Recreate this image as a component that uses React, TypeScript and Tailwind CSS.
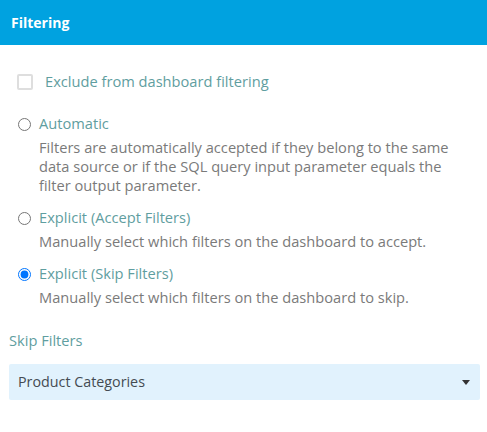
import { useState } from "react";

const options = [
  {
    id: "automatic",
    label: "Automatic",
    description:
      "Filters are automatically accepted if they belong to the same data source or if the SQL query input parameter equals the filter output parameter.",
  },
  {
    id: "accept",
    label: "Explicit (Accept Filters)",
    description: "Manually select which filters on the dashboard to accept.",
  },
  {
    id: "skip",
    label: "Explicit (Skip Filters)",
    description: "Manually select which filters on the dashboard to skip.",
  },
];

export default function App() {
  const [mode, setMode] = useState("skip");

  return (
    <div className="w-[487px] h-[432px] bg-white text-[14.65px]" style={{ fontFamily: '"Open Sans", sans-serif' }}>
      {/* Header */}
      <div className="h-[45px] bg-[#00a2e0] flex items-center px-[11px]">
        <span className="text-white font-bold text-[14px]">Filtering</span>
      </div>

      <div className="px-[17px] pt-[29px]">
        <label className="flex items-center gap-[12px] h-[16px]">
          <span className="w-[16px] h-[16px] rounded-[2px] border-2 border-[#dedede] bg-white" />
          <span className="text-[#5f9ea0]">Exclude from dashboard filtering</span>
        </label>

        <div className="mt-[24px] flex flex-col gap-[13px]">
          {options.map((o) => (
            <div key={o.id} className="flex flex-col">
              <label className="flex items-center h-[20px]">
                <input
                  type="radio"
                  name="mode"
                  checked={mode === o.id}
                  onChange={() => setMode(o.id)}
                  className="m-0 ml-[1px] w-[13px] h-[13px] accent-[#0075ff]"
                />
                <span className="ml-[8px] text-[#5f9ea0]">{o.label}</span>
              </label>
              <p className="ml-[22px] mt-[4px] leading-[19px] text-[#7a7a7a] pr-[10px]">{o.description}</p>
            </div>
          ))}
        </div>
      </div>

      <div className="px-[9px] mt-[23px]">
        <div className="text-[#5f9ea0] h-[20px] leading-[20px]">Skip Filters</div>
        <div className="mt-[14px] h-[36px] w-[471px] rounded-[2px] bg-[#e1f2fd] flex items-center justify-between pl-[9px] pr-[10px]">
          <span className="text-[#444b52] text-[14.3px]">Product Categories</span>
          <svg width="8" height="5" viewBox="0 0 8 5">
            <path d="M0 0h8L4 5z" fill="#333" />
          </svg>
        </div>
      </div>
    </div>
  );
}
